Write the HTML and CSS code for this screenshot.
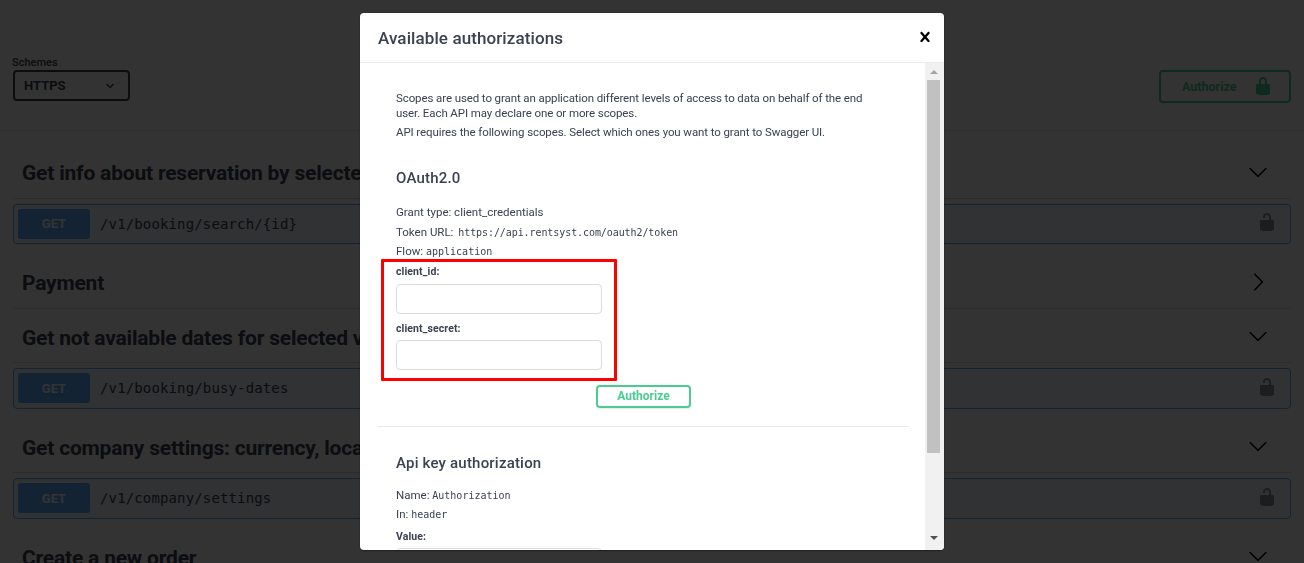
FILE: index.html
```html
<!DOCTYPE html>
<html lang="en">
<head>
<meta charset="utf-8">
<title>Swagger UI</title>
<link rel="stylesheet" href="styles.css">
</head>
<body>
<div class="page">
  <section class="scheme">
    <div class="schemes">
      <span class="schemes-label">Schemes</span>
      <div class="select">HTTPS
        <svg class="select-arrow" viewBox="0 0 20 20"><path d="M3 6l7 7 7-7" fill="none" stroke="currentColor" stroke-width="2.6"/></svg>
      </div>
    </div>
    <button class="authorize-top">Authorize
      <svg class="lock" viewBox="0 0 20 20"><path d="M15.8 8H14V5.6C14 2.703 12.665 1 10 1 7.334 1 6 2.703 6 5.6V8H4c-.553 0-1 .646-1 1.199V17c0 .549.428 1.139.951 1.307l1.197.387C5.67 18.861 6.55 19 7.1 19h5.8c.549 0 1.428-.139 1.951-.307l1.196-.387c.524-.167.953-.757.953-1.306V9.199C17 8.646 16.352 8 15.8 8zM12 8H8V5.199C8 3.754 8.797 3 10 3c1.203 0 2 .754 2 2.199V8z"/></svg>
    </button>
  </section>

  <main class="ops">
    <h3 class="tag"><span>Get info about reservation by selected id</span>
      <svg class="arrow" viewBox="0 0 20 20"><path d="M17.418 6.109c.272-.268.709-.268.979 0s.271.701 0 .969l-7.908 7.83c-.27.268-.707.268-.979 0l-7.908-7.83c-.27-.268-.27-.701 0-.969.271-.268.709-.268.979 0L10 13.25l7.418-7.141z"/></svg>
    </h3>
    <div class="op"><span class="badge">GET</span><span class="path">/v1/booking/search/{id}</span>
      <svg class="op-lock" viewBox="0 0 20 20"><path d="M15.8 8H14V5.6C14 2.703 12.665 1 10 1 7.334 1 6 2.703 6 5.6V6h2v-.801C8 3.754 8.797 3 10 3c1.203 0 2 .754 2 2.199V8H4c-.553 0-1 .646-1 1.199V17c0 .549.428 1.139.951 1.307l1.197.387C5.672 18.861 6.55 19 7.1 19h5.8c.549 0 1.428-.139 1.951-.307l1.196-.387c.524-.167.953-.757.953-1.306V9.199C17 8.646 16.352 8 15.8 8z"/></svg>
    </div>

    <h3 class="tag"><span>Payment</span>
      <svg class="arrow arrow-right" viewBox="0 0 20 20"><path d="M17.418 6.109c.272-.268.709-.268.979 0s.271.701 0 .969l-7.908 7.83c-.27.268-.707.268-.979 0l-7.908-7.83c-.27-.268-.27-.701 0-.969.271-.268.709-.268.979 0L10 13.25l7.418-7.141z"/></svg>
    </h3>

    <h3 class="tag"><span>Get not available dates for selected vehicle</span>
      <svg class="arrow" viewBox="0 0 20 20"><path d="M17.418 6.109c.272-.268.709-.268.979 0s.271.701 0 .969l-7.908 7.83c-.27.268-.707.268-.979 0l-7.908-7.83c-.27-.268-.27-.701 0-.969.271-.268.709-.268.979 0L10 13.25l7.418-7.141z"/></svg>
    </h3>
    <div class="op"><span class="badge">GET</span><span class="path">/v1/booking/busy-dates</span>
      <svg class="op-lock" viewBox="0 0 20 20"><path d="M15.8 8H14V5.6C14 2.703 12.665 1 10 1 7.334 1 6 2.703 6 5.6V6h2v-.801C8 3.754 8.797 3 10 3c1.203 0 2 .754 2 2.199V8H4c-.553 0-1 .646-1 1.199V17c0 .549.428 1.139.951 1.307l1.197.387C5.672 18.861 6.55 19 7.1 19h5.8c.549 0 1.428-.139 1.951-.307l1.196-.387c.524-.167.953-.757.953-1.306V9.199C17 8.646 16.352 8 15.8 8z"/></svg>
    </div>

    <h3 class="tag"><span>Get company settings: currency, locations</span>
      <svg class="arrow" viewBox="0 0 20 20"><path d="M17.418 6.109c.272-.268.709-.268.979 0s.271.701 0 .969l-7.908 7.83c-.27.268-.707.268-.979 0l-7.908-7.83c-.27-.268-.27-.701 0-.969.271-.268.709-.268.979 0L10 13.25l7.418-7.141z"/></svg>
    </h3>
    <div class="op"><span class="badge">GET</span><span class="path">/v1/company/settings</span>
      <svg class="op-lock" viewBox="0 0 20 20"><path d="M15.8 8H14V5.6C14 2.703 12.665 1 10 1 7.334 1 6 2.703 6 5.6V6h2v-.801C8 3.754 8.797 3 10 3c1.203 0 2 .754 2 2.199V8H4c-.553 0-1 .646-1 1.199V17c0 .549.428 1.139.951 1.307l1.197.387C5.672 18.861 6.55 19 7.1 19h5.8c.549 0 1.428-.139 1.951-.307l1.196-.387c.524-.167.953-.757.953-1.306V9.199C17 8.646 16.352 8 15.8 8z"/></svg>
    </div>

    <h3 class="tag"><span>Create a new order</span>
      <svg class="arrow" viewBox="0 0 20 20"><path d="M17.418 6.109c.272-.268.709-.268.979 0s.271.701 0 .969l-7.908 7.83c-.27.268-.707.268-.979 0l-7.908-7.83c-.27-.268-.27-.701 0-.969.271-.268.709-.268.979 0L10 13.25l7.418-7.141z"/></svg>
    </h3>
  </main>
</div>

<div class="overlay"></div>

<div class="modal" role="dialog">
  <header class="modal-head">
    <h3 class="modal-title">Available authorizations</h3>
    <svg class="close" viewBox="0 0 20 20"><path d="M14.348 14.849c-.469.469-1.229.469-1.697 0L10 11.819l-2.651 3.029c-.469.469-1.229.469-1.697 0-.469-.469-.469-1.229 0-1.697l2.758-3.15-2.759-3.152c-.469-.469-.469-1.228 0-1.697.469-.469 1.228-.469 1.697 0L10 8.183l2.651-3.031c.469-.469 1.228-.469 1.697 0 .469.469.469 1.229 0 1.697l-2.758 3.152 2.758 3.15c.469.469.469 1.229 0 1.698z"/></svg>
  </header>
  <div class="modal-main">
    <div class="modal-body">
      <div class="block">
        <div class="scopes">
          <p class="intro">Scopes are used to grant an application different levels of access to data on behalf of the end user. Each API may declare one or more scopes.</p>
          <p class="intro intro-2">API requires the following scopes. Select which ones you want to grant to Swagger UI.</p>
        </div>
        <h4 class="auth-title">OAuth2.0</h4>
        <p class="line">Grant type: client_credentials</p>
        <p class="line">Token URL: <code class="mono mono-url">https://api.rentsyst.com/oauth2/token</code></p>
        <p class="line">Flow: <code class="mono">application</code></p>
        <div class="fields">
          <label class="label">client_id:</label>
          <input class="input" type="text">
          <label class="label label-2">client_secret:</label>
          <input class="input" type="text">
          <div class="highlight"></div>
        </div>
        <div class="actions"><button class="authorize">Authorize</button></div>
      </div>
      <hr class="rule">
      <div class="block">
        <h4 class="auth-title auth-title-2">Api key authorization</h4>
        <p class="line">Name: <code class="mono">Authorization</code></p>
        <p class="line">In: <code class="mono">header</code></p>
        <label class="label label-3">Value:</label>
        <input class="input" type="text">
      </div>
    </div>
    <div class="scrollbar">
      <span class="sb-up"></span>
      <span class="sb-thumb"></span>
      <span class="sb-down"></span>
    </div>
  </div>
</div>
</body>
</html>
```

FILE: styles.css
```css
* { box-sizing: border-box; }
html, body { margin: 0; height: 100%; overflow: hidden; }
body { background: #fff; font-family: Roboto, "Liberation Sans", sans-serif; color: #3b4151; }

.page { height: 563px; overflow: hidden; }

.scheme {
  height: 131px;
  padding: 55px 13px 0;
  display: flex;
  justify-content: space-between;
  align-items: flex-start;
  background: #fff;
  border-bottom: 1px solid #e6e6e6;
}
.schemes { display: flex; flex-direction: column; }
.schemes-label { font-size: 11px; line-height: 15px; font-weight: 500; margin-left: -1px; }
.select {
  width: 117px;
  height: 31px;
  padding: 0 10px 0 9px;
  display: flex;
  align-items: center;
  justify-content: space-between;
  border: 2px solid #41444e;
  border-radius: 4px;
  font-size: 13px;
  font-weight: 700;
  color: #3b4151;
}
.select-arrow { width: 10px; height: 10px; color: #3b4151; margin-right: 3px; }

.authorize-top {
  width: 132px;
  height: 33px;
  margin-top: 15px;
  padding: 0 16px 0 21px;
  display: flex;
  align-items: center;
  justify-content: space-between;
  background: transparent;
  border: 2px solid #49cc90;
  border-radius: 4px;
  font: 700 12.5px Roboto, sans-serif;
  color: #49cc90;
}
.lock { width: 20px; height: 20px; fill: #49cc90; margin-top: -1px; }

.ops { padding: 18px 13px 0; }
.tag {
  height: 49.5px;
  margin: 0 0 5px;
  padding: 0 23px 0 9px;
  display: flex;
  align-items: center;
  justify-content: space-between;
  border-bottom: 1px solid #dcdcdf;
  font-size: 21px;
  line-height: 26px;
  font-weight: 700;
  letter-spacing: -.2px;
  color: #3b4151;
}
.arrow { width: 20px; height: 20px; fill: #000; flex: none; margin-top: -3px; }
.arrow-right { transform: rotate(-90deg); }

.op {
  height: 40.5px;
  margin-bottom: 15px;
  padding: 0 13px 0 4px;
  display: flex;
  align-items: center;
  background: rgba(97, 175, 254, .1);
  border: 1px solid #61affe;
  border-radius: 4px;
}
.badge {
  width: 72px;
  height: 30px;
  display: flex;
  align-items: center;
  justify-content: center;
  background: #61affe;
  border-radius: 3px;
  font-size: 13px;
  font-weight: 700;
  color: #fff;
}
.path {
  margin-left: 10px;
  font-family: "DejaVu Sans Mono", monospace;
  font-size: 14px;
  letter-spacing: .14px;
  color: #3b4151;
}
.op-lock { width: 20px; height: 20px; margin: -3px 0 0 auto; fill: #000; opacity: .4; }

.overlay { position: fixed; inset: 0; background: rgba(0, 0, 0, .8); }

.modal {
  position: fixed;
  top: 13px;
  left: 360px;
  width: 584px;
  height: 537px;
  display: flex;
  flex-direction: column;
  background: #fff;
  border-radius: 4px;
  box-shadow: 0 1px 2px rgba(0, 0, 0, .4);
  overflow: hidden;
}
.modal-head {
  height: 50px;
  flex: none;
  padding: 0 9px 0 18px;
  display: flex;
  align-items: center;
  justify-content: space-between;
  border-bottom: 1px solid #ebebeb;
}
.modal-title { margin: 0; font-size: 17px; font-weight: 500; color: #3b4151; letter-spacing: .1px; }
.close { width: 20px; height: 20px; fill: #000; margin-top: -2px; }

.modal-main { flex: 1; min-height: 0; display: flex; }
.modal-body { flex: 1; min-width: 0; padding: 28px 16px 0 18px; overflow: hidden; }
.block { padding: 0 18px; }

.intro { margin: 0; max-width: 480px; font-size: 11.5px; line-height: 15px; letter-spacing: -.1px; color: #3b4151; }
.intro-2 { margin-top: 4px; }

.auth-title { margin: 28px 0 15px; font-size: 15px; line-height: 20px; font-weight: 500; letter-spacing: .2px; color: #3b4151; }
.auth-title-2 { margin: 26px 0 13px; }

.line { margin: 0; font-size: 11.5px; line-height: 19.5px; color: #3b4151; }
.mono { font-family: "DejaVu Sans Mono", monospace; font-size: 10px; }
.mono-url { margin-left: 2px; letter-spacing: -.08px; }

.fields { position: relative; width: 206px; }
.label { display: block; font-size: 10.5px; line-height: 20px; font-weight: 700; letter-spacing: .1px; color: #3b4151; }
.label-2 { margin-top: 5px; }
.label-3 { margin-top: 2px; }
.input {
  display: block;
  width: 206px;
  height: 30px;
  margin-top: 2px;
  padding: 0 8px;
  background: #fff;
  border: 1px solid #dcdcdc;
  border-radius: 4px;
}
.label-2 + .input { margin-top: 1px; }
.label-3 + .input { margin-top: 1px; }
.highlight {
  position: absolute;
  top: -3px;
  left: -15px;
  width: 236px;
  height: 122px;
  border: 3px solid #f00;
  border-radius: 1px;
  pointer-events: none;
}

.actions { margin-top: 15px; text-align: center; }
.authorize {
  width: 95px;
  height: 23px;
  padding: 0;
  background: transparent;
  border: 2px solid #49cc90;
  border-radius: 4px;
  font: 700 12px/1 Roboto, sans-serif;
  color: #49cc90;
  box-shadow: 0 1px 2px rgba(0, 0, 0, .1);
}

.rule { height: 1px; margin: 18px 0 0; background: #ebebeb; border: 0; }

.scrollbar {
  width: 19px;
  flex: none;
  padding: 0 4px 0 2px;
  display: flex;
  flex-direction: column;
  align-items: center;
  background: #f1f1f1;
}
.sb-up, .sb-down { flex: none; width: 0; height: 0; border-left: 4px solid transparent; border-right: 4px solid transparent; }
.sb-up { margin: 7px 0 6px; border-bottom: 4px solid #a3a3a3; }
.sb-down { margin-top: 83px; border-top: 4px solid #505050; }
.sb-thumb { flex: none; width: 13px; height: 373px; background: #c1c1c1; }
```
